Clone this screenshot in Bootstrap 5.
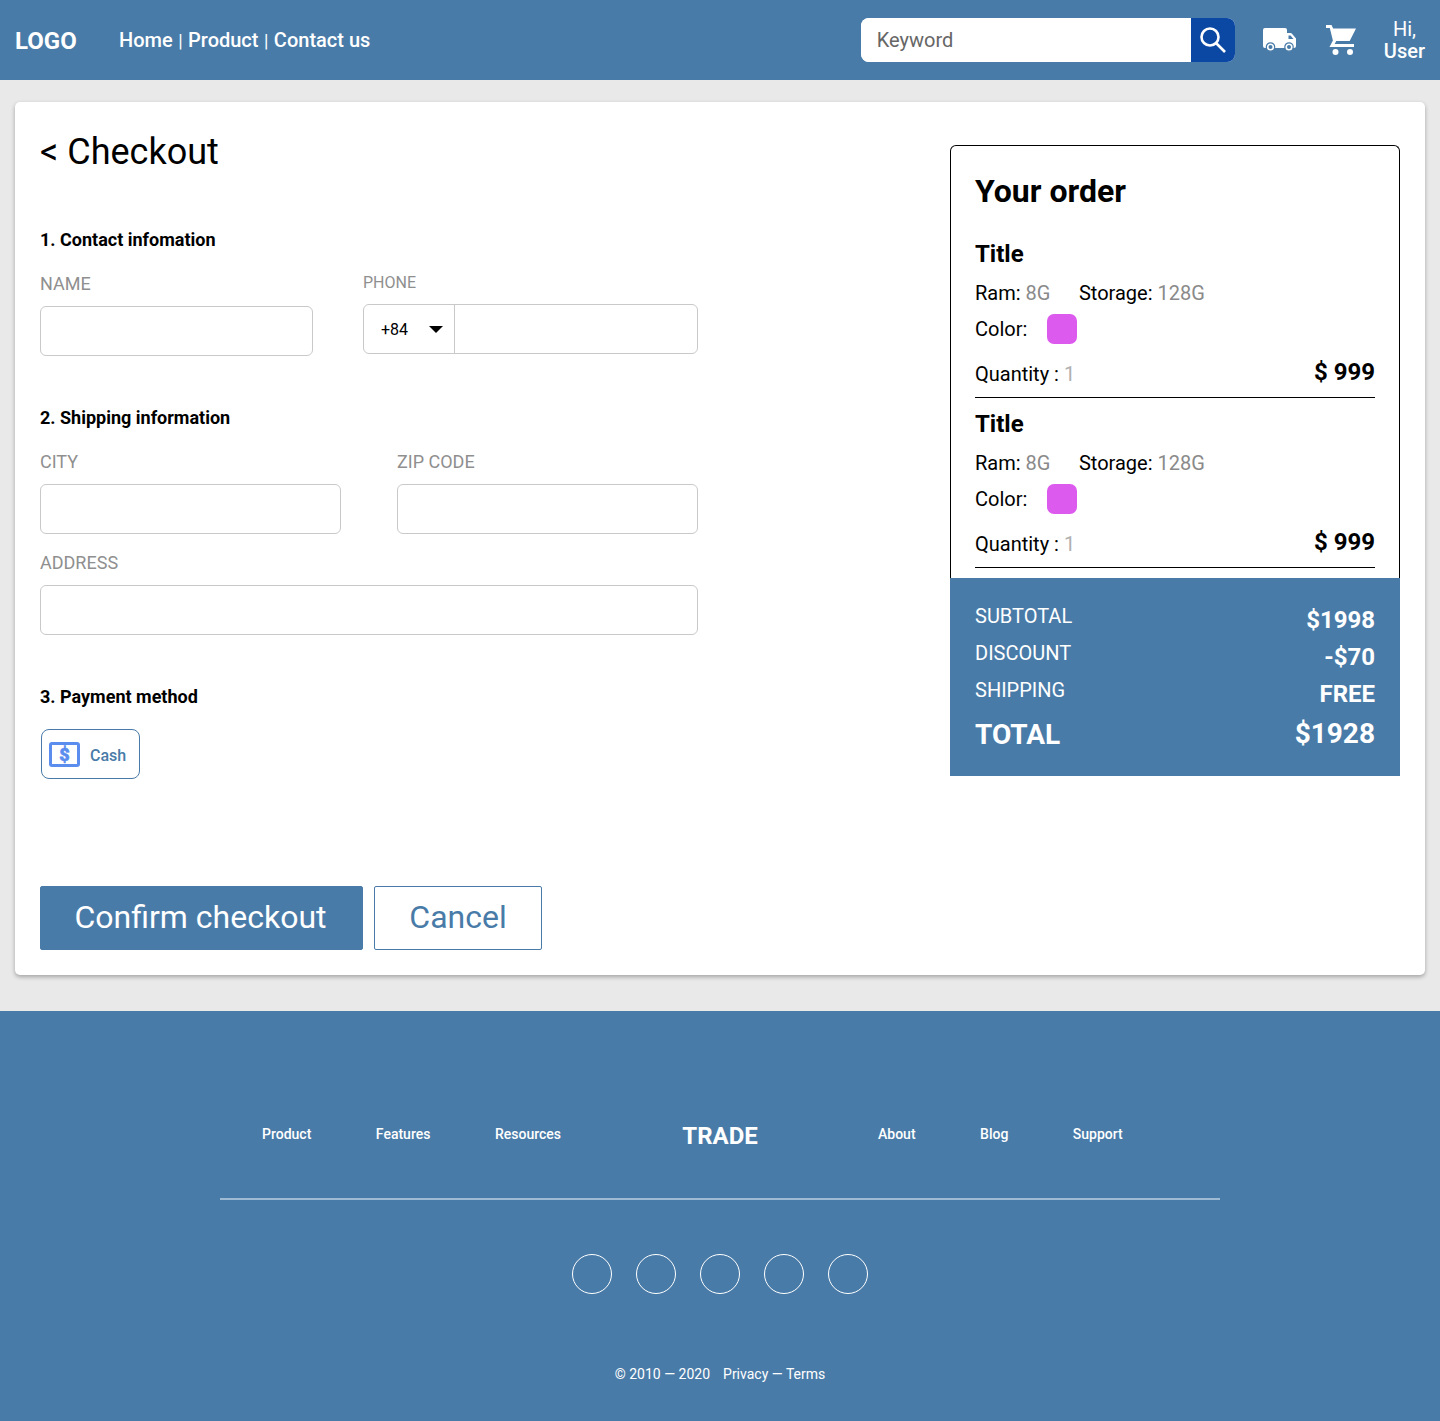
<!DOCTYPE html>
<html lang="en">
<head>
    <meta charset="UTF-8">
    <meta name="viewport" content="width=device-width, initial-scale=1">
    <title>Checkout</title>
    <link rel="stylesheet" href="https://cdn.jsdelivr.net/npm/bootstrap@5.3.0/dist/css/bootstrap.min.css">
    <style>
        body { font-family: Roboto, "Liberation Sans", sans-serif; background: #e9e9e9; color: #000; }
        .top-bar { height: 80px; background: #497ba8; padding: 0 15px; color: #fff; }
        .logo-text { font-size: 24px; font-weight: 700; width: 104px; margin-top: 2px; }
        .top-links { font-size: 20px; font-weight: 500; }
        .top-links span { font-weight: 400; font-size: 18px; margin: 0 .5px; }
        .top-links a { color: #fff; text-decoration: none; }
        .search-box { width: 374px; height: 44px; border-radius: 8px; overflow: hidden; background: #fff; }
        .search-box input { border: 0; outline: 0; flex: 1; min-width: 0; padding: 0 16px; font-size: 20px; color: #666; }
        .search-box input::placeholder { color: #666; opacity: 1; }
        .search-btn { width: 44px; background: #0b48a4; border: 0; padding: 0; }
        .truck-icon { margin-left: 28px; }
        .cart-icon { margin: 0 28px 0 29px; }
        .hi-user { font-size: 20px; line-height: 22px; text-align: center; }
        .page-panel { margin: 22px 15px 36px; height: 873px; background: #fff; border-radius: 5px; box-shadow: 0 2px 4px rgba(0,0,0,.3); padding: 25px; }
        .left-col { width: 658px; }
        .page-title { font-size: 36px; font-weight: 400; line-height: 48px; margin: 1px 0 52px; }
        .sec-title { font-size: 18px; font-weight: 700; line-height: 24px; margin: 0; }
        .fld-label { font-size: 18px; color: #8f8f8f; line-height: 22px; margin: 0 0 11px; display: block; }
        .fld-input { height: 50px; width: 100%; border: 1px solid #c9c9c9; border-radius: 6px; display: block; outline: 0; }
        .phone-label { font-size: 16px; padding-top: 1px; margin-bottom: 10px; }
        .phone-box { height: 50px; border: 1px solid #c9c9c9; border-radius: 6px; display: flex; }
        .phone-code { width: 91px; border-right: 1px solid #c9c9c9; font-size: 16px; display: flex; align-items: center; justify-content: space-between; padding: 1px 11px 0 17px; }
        .caret-down { width: 0; height: 0; border-left: 7.5px solid transparent; border-right: 7.5px solid transparent; border-top: 7.5px solid #000; }
        .cash-btn { width: 99px; height: 50px; margin-left: 1px; border: 1px solid #497ba8; border-radius: 8px; color: #497ba8; font-size: 16px; font-weight: 500; display: flex; align-items: center; gap: 10px; padding: 2px 0 0 7px; }
        .btn-confirm, .btn-cancel { height: 64px; font-size: 32px; border-radius: 2px; padding: 0 2px 2px 0; }
        .btn-confirm { width: 323px; background: #497ba8; border: 1px solid #497ba8; color: #fff; }
        .btn-cancel { width: 168px; background: #fff; border: 1px solid #497ba8; color: #497ba8; padding-right: 0; }
        .order-col { width: 450px; margin-top: 18px; }
        .order-box { height: 433px; border: 1px solid #000; border-bottom: 0; border-radius: 6px 6px 0 0; padding: 25px 24px 0; }
        .order-title { font-size: 32px; font-weight: 700; line-height: 40px; margin: 0 0 29px; }
        .item-title { font-size: 24px; font-weight: 700; line-height: 28px; margin: 0; }
        .item-line { font-size: 20px; line-height: 24px; }
        .item-specs { gap: 28.5px; margin-top: 9px; padding-top: 4px; }
        .muted-val { color: #8a8a8a; }
        .qty-val { color: #b0b0b0; }
        .swatch { width: 30px; height: 30px; background: #dc5aee; border-radius: 7px; margin-left: 20px; }
        .item-price { font-size: 24px; font-weight: 700; margin-bottom: 2px; }
        .order-item { height: 158px; border-bottom: 1px solid #000; }
        .order-item + .order-item { height: 170px; padding-top: 12px; }
        .totals-box { height: 198px; background: #497ba8; color: #fff; padding: 23px 25px 0; }
        .tot-row { height: 37px; font-size: 20px; }
        .tot-row b { font-size: 24px; font-weight: 700; line-height: 39px; }
        .tot-row.grand { font-size: 28px; font-weight: 700; height: 44px; margin-top: 1px; }
        .tot-row.grand b { font-size: 28px; line-height: 40px; margin-bottom: 2px; }
        .foot-area { height: 410px; background: #497ba8; color: #fff; }
        .foot-links { width: 1000px; height: 189px; border-bottom: 2px solid #9fbbd3; padding-top: 113px; margin: 0 auto; }
        .foot-links a { color: #fff; text-decoration: none; font-size: 14px; font-weight: 500; }
        .foot-side { width: 437px; gap: 64.5px; }
        .foot-brand { font-size: 24px; font-weight: 700; width: 126px; text-align: center; margin-top: -6px; }
        .social-dot { width: 40px; height: 40px; border: 1px solid #fff; border-radius: 50%; }
        .foot-copy { font-size: 14px; color: #fff; margin-top: 70px; }
        .foot-copy span { margin-left: 13px; }
    </style>
</head>
<body>

    <!-- Top bar -->
    <header class="top-bar d-flex align-items-center">
        <div class="logo-text">LOGO</div>
        <nav class="top-links">
            <a href="#">Home</a> <span>|</span> <a href="#">Product</a> <span>|</span> <a href="#">Contact us</a>
        </nav>
        <div class="d-flex align-items-center ms-auto">
            <form class="search-box d-flex">
                <input type="text" placeholder="Keyword">
                <button class="search-btn d-flex align-items-center justify-content-center" type="button">
                    <svg width="28" height="28" viewBox="0 0 28 28" fill="none" stroke="#fff" stroke-width="2.6"><circle cx="11" cy="11" r="8.500"/><line x1="17" y1="17" x2="26" y2="26"/></svg>
                </button>
            </form>
            <svg class="truck-icon" width="34" height="24" viewBox="0 0 34 24"><path fill="#fff" d="M0 2a2 2 0 0 1 2-2h20a2 2 0 0 1 2 2v3h3.500a2 2 0 0 1 1.500.7l4 4.800v7.500a2 2 0 0 1-2 2H2a2 2 0 0 1-2-2z"/><path fill="#497ba8" d="M25.500 7.500h2l3 3.500h-5z"/><circle cx="7.500" cy="19" r="4.200" fill="#fff" stroke="#497ba8" stroke-width="1.200"/><circle cx="7.500" cy="19" r="2" fill="#497ba8"/><circle cx="26" cy="19" r="4.200" fill="#fff" stroke="#497ba8" stroke-width="1.200"/><circle cx="26" cy="19" r="2" fill="#497ba8"/></svg>
            <svg class="cart-icon" width="30" height="30" viewBox="0 0 30 30" fill="#fff"><path d="M0 0h5.500l1.700 3.500H30L23.700 16H10.300l-1.700 3H28v3H3.500l3.400-6.500L3.800 3H0z"/><circle cx="9.500" cy="27" r="3"/><circle cx="24" cy="27" r="3"/></svg>
            <div class="hi-user">Hi,<br><span class="fw-medium">User</span></div>
        </div>
    </header>

    <!-- Checkout panel -->
    <main class="page-panel d-flex justify-content-between">
        <div class="left-col">
            <h1 class="page-title">&lt; Checkout</h1>

            <h2 class="sec-title">1. Contact infomation</h2>
            <div class="d-flex" style="gap:50px;margin-top:19px">
                <div style="width:273px;padding-top:2px">
                    <label class="fld-label">NAME</label>
                    <input class="fld-input" type="text">
                </div>
                <div class="flex-grow-1">
                    <label class="fld-label phone-label">PHONE</label>
                    <div class="phone-box">
                        <div class="phone-code">+84 <i class="caret-down"></i></div>
                        <input class="border-0 flex-grow-1 bg-transparent" type="text" style="outline:0;min-width:0">
                    </div>
                </div>
            </div>

            <h2 class="sec-title" style="margin-top:50px">2. Shipping information</h2>
            <div class="d-flex" style="gap:56px;margin-top:21px">
                <div style="width:301px">
                    <label class="fld-label">CITY</label>
                    <input class="fld-input" type="text">
                </div>
                <div style="width:301px">
                    <label class="fld-label">ZIP CODE</label>
                    <input class="fld-input" type="text">
                </div>
            </div>
            <div style="margin-top:18px">
                <label class="fld-label">ADDRESS</label>
                <input class="fld-input" type="text">
            </div>

            <h2 class="sec-title" style="margin-top:50px">3. Payment method</h2>
            <div class="cash-btn" style="margin-top:20px">
                <svg width="32" height="26" viewBox="0 0 32 26" fill="none"><rect x="1.500" y="1.500" width="28" height="22" rx="1.500" stroke="#5b8def" stroke-width="3"/><text x="15.500" y="19" text-anchor="middle" font-family="Roboto" font-size="18" font-weight="900" fill="#5b8def" stroke="#5b8def" stroke-width=".6">$</text></svg>
                <span style="margin:2px 0 0 -1px">Cash</span>
            </div>

            <div class="d-flex" style="gap:11px;margin-top:107px">
                <button class="btn btn-confirm" type="button">Confirm checkout</button>
                <button class="btn btn-cancel" type="button">Cancel</button>
            </div>
        </div>

        <!-- Order summary -->
        <aside class="order-col">
            <div class="order-box">
                <h2 class="order-title">Your order</h2>
                <div class="order-item">
                    <h3 class="item-title">Title</h3>
                    <div class="item-line item-specs d-flex">
                        <span>Ram: <span class="muted-val">8G</span></span>
                        <span>Storage: <span class="muted-val">128G</span></span>
                    </div>
                    <div class="item-line d-flex align-items-center" style="margin-top:9px">Color: <i class="swatch"></i></div>
                    <div class="item-line d-flex justify-content-between align-items-end" style="margin-top:16px">
                        <span>Quantity : <span class="qty-val">1</span></span>
                        <span class="item-price">$ 999</span>
                    </div>
                </div>
                <div class="order-item">
                    <h3 class="item-title">Title</h3>
                    <div class="item-line item-specs d-flex">
                        <span>Ram: <span class="muted-val">8G</span></span>
                        <span>Storage: <span class="muted-val">128G</span></span>
                    </div>
                    <div class="item-line d-flex align-items-center" style="margin-top:9px">Color: <i class="swatch"></i></div>
                    <div class="item-line d-flex justify-content-between align-items-end" style="margin-top:16px">
                        <span>Quantity : <span class="qty-val">1</span></span>
                        <span class="item-price">$ 999</span>
                    </div>
                </div>
            </div>
            <div class="totals-box">
                <div class="tot-row d-flex justify-content-between"><span>SUBTOTAL</span><b>$1998</b></div>
                <div class="tot-row d-flex justify-content-between"><span>DISCOUNT</span><b>-$70</b></div>
                <div class="tot-row d-flex justify-content-between"><span>SHIPPING</span><b>FREE</b></div>
                <div class="tot-row grand d-flex justify-content-between align-items-center"><span>TOTAL</span><b>$1928</b></div>
            </div>
        </aside>
    </main>

    <!-- Footer -->
    <footer class="foot-area">
        <div class="foot-links d-flex align-items-start justify-content-center">
            <div class="foot-side d-flex justify-content-end" style="padding-right:96px">
                <a href="#">Product</a><a href="#">Features</a><a href="#">Resources</a>
            </div>
            <div class="foot-brand">TRADE</div>
            <div class="foot-side d-flex" style="padding-left:95px">
                <a href="#">About</a><a href="#">Blog</a><a href="#">Support</a>
            </div>
        </div>
        <div class="d-flex justify-content-center" style="gap:24px;margin-top:54px">
            <i class="social-dot"></i><i class="social-dot"></i><i class="social-dot"></i><i class="social-dot"></i><i class="social-dot"></i>
        </div>
        <div class="foot-copy text-center">&copy; 2010 — 2020<span>Privacy — Terms</span></div>
    </footer>

    <script src="https://cdn.jsdelivr.net/npm/bootstrap@5.3.0/dist/js/bootstrap.bundle.min.js"></script>
</body>
</html>
